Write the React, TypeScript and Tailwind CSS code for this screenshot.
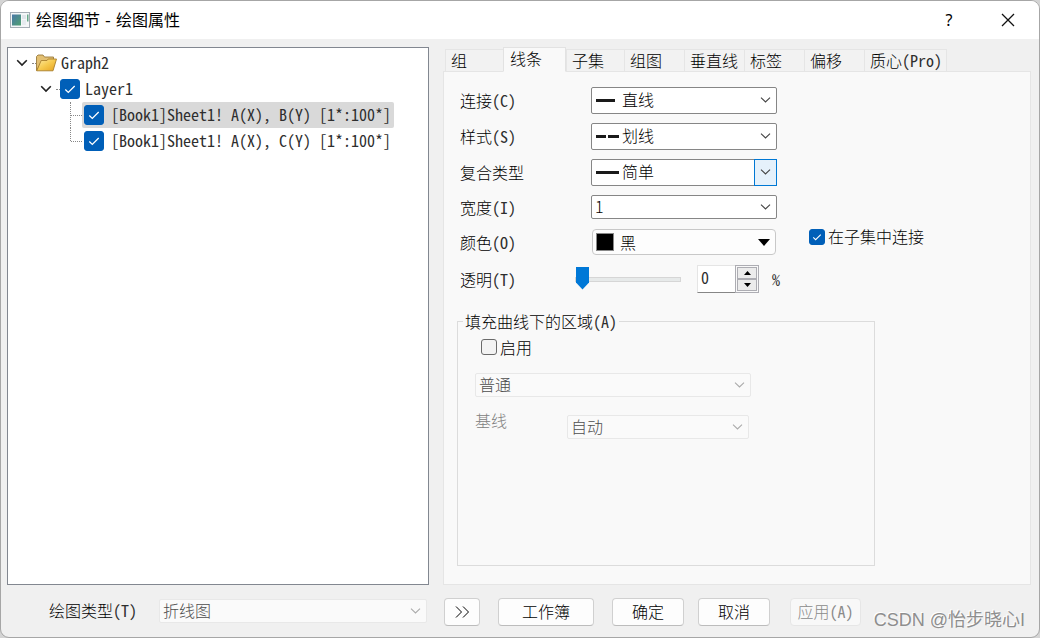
import React from "react";

const BASE_FONT = "font-['Noto_Sans_Mono_CJK_SC','Noto_Sans_CJK_SC',monospace]";
const LIGHT_FONT = "font-['Noto_Sans_CJK_SC',sans-serif] font-light";

function Cjk({ children }: { children: string }) {
  return <span className={LIGHT_FONT}>{children}</span>;
}

function Latin({ children }: { children: string }) {
  return <span className="text-[#2e2e2e]">{children}</span>;
}

function Chevron({ className = "" }: { className?: string }) {
  return (
    <svg
      aria-hidden="true"
      viewBox="0 0 11 6"
      className={`h-[6px] w-[11px] fill-none stroke-current ${className}`}
      strokeWidth="1.1"
    >
      <path d="M1 0.6 5.5 5 10 0.6" />
    </svg>
  );
}

function TickBox({
  id,
  label,
  size = "small",
  checked = false,
}: {
  id?: string;
  label?: string;
  size?: "small" | "large";
  checked?: boolean;
}) {
  const box = size === "large" ? "h-5 w-5" : "h-4 w-4";
  return (
    <span className={`relative block shrink-0 ${box}`}>
      <input
        id={id}
        aria-label={label}
        type="checkbox"
        defaultChecked={checked}
        className={`peer block appearance-none rounded-[3px] border border-[#6a6a6a] bg-[#f3f3f3] checked:border-[#005fb8] checked:bg-[#005fb8] ${box}`}
      />
      <svg
        aria-hidden="true"
        viewBox="0 0 20 20"
        className="pointer-events-none absolute inset-0 hidden h-full w-full fill-none stroke-white peer-checked:block"
        strokeWidth="1.3"
      >
        <path d="M5.300 10.600 8.300 13.400 14.700 7" />
      </svg>
    </span>
  );
}

function Combo({
  id,
  value,
  height = "h-[27px]",
  pad = "pl-[30px]",
  art,
  hot = false,
}: {
  id: string;
  value: string;
  height?: string;
  pad?: string;
  art?: React.ReactNode;
  hot?: boolean;
}) {
  return (
    <div className={`relative w-[186px] ${height}`}>
      <select
        id={id}
        className={`block h-full w-full appearance-none rounded-[2px] border border-[#868686] bg-white pb-[2px] text-base leading-5 ${LIGHT_FONT} ${pad}`}
      >
        <option>{value}</option>
      </select>
      {art}
      <span
        className={`pointer-events-none absolute inset-y-0 right-0 flex w-[23px] items-center justify-center ${
          hot ? "border border-[#0078d4] bg-[#e5f1fb]" : ""
        }`}
      >
        <Chevron className="text-[#444444]" />
      </span>
    </div>
  );
}

function GreyCombo({ id, label, value, box }: { id: string; label?: string; value: string; box: string }) {
  return (
    <div className={`relative h-6 ${box}`}>
      <select
        id={id}
        aria-label={label}
        disabled
        className={`block h-full w-full appearance-none rounded-[2px] border border-[#e8e8e8] bg-[#fafafa] pb-[2px] pl-[3px] text-base leading-5 text-[#4d4d4d] opacity-100 ${LIGHT_FONT}`}
      >
        <option>{value}</option>
      </select>
      <span className="pointer-events-none absolute inset-y-0 right-0 flex w-[23px] items-center justify-center">
        <Chevron className="text-[#ababab]" />
      </span>
    </div>
  );
}

function LineArt({ children }: { children: React.ReactNode }) {
  return (
    <svg
      aria-hidden="true"
      viewBox="0 0 24 4"
      className="pointer-events-none absolute top-[11px] left-[5px] h-1 w-6 fill-[#1a1a1a]"
    >
      {children}
    </svg>
  );
}

function Row({
  id,
  text,
  latin,
  height,
  children,
}: {
  id: string;
  text: string;
  latin?: string;
  height: string;
  children: React.ReactNode;
}) {
  return (
    <div className={`flex items-center ${height}`}>
      <label htmlFor={id} className="w-[131px] shrink-0 pb-px">
        <Cjk>{text}</Cjk>
        {latin && <Latin>{latin}</Latin>}
      </label>
      {children}
    </div>
  );
}

function TreeArrow() {
  return (
    <button type="button" aria-label="折叠" className="flex h-4 w-[15px] shrink-0 items-center justify-center">
      <svg viewBox="0 0 12 8" className="h-2 w-3 fill-none stroke-[#222222]" strokeWidth="1.6">
        <path d="M1.2 1.2 6 6 10.800 1.2" />
      </svg>
    </button>
  );
}

function Folder() {
  return (
    <svg viewBox="0 0 21 18" className="h-[18px] w-[21px] shrink-0">
      <defs>
        <linearGradient id="folderFront" x1="0" y1="0" x2="1" y2="1">
          <stop offset="0" stopColor="#fdeaa6" />
          <stop offset="0.5" stopColor="#f6ca4f" />
          <stop offset="1" stopColor="#e5a11f" />
        </linearGradient>
      </defs>
      <path d="M0.500 16.500V2.500L2 1H7L8.500 3H17.500V7L6 8Z" fill="#e3c073" stroke="#9a7a3c" strokeWidth="0.9" />
      <path d="M0.700 16.800 5.200 6.500H11L12.200 5H20.500L17 16.800Z" fill="url(#folderFront)" stroke="#a87f2c" strokeWidth="0.9" />
    </svg>
  );
}

const tabs: { text: string; latin?: string; width: string; active?: boolean }[] = [
  { text: "组", width: "w-[58px]" },
  { text: "线条", width: "w-[63px]", active: true },
  { text: "子集", width: "w-[58px]" },
  { text: "组图", width: "w-[60px]" },
  { text: "垂直线", width: "w-[60px]" },
  { text: "标签", width: "w-[60px]" },
  { text: "偏移", width: "w-[60px]" },
  { text: "质心", latin: "(Pro)", width: "w-[83px]" },
];

const plots = ["[Book1]Sheet1! A(X), B(Y) [1*:100*]", "[Book1]Sheet1! A(X), C(Y) [1*:100*]"];

const TREE_TEXT = "pb-[3px] whitespace-pre text-[#2e2e2e]";

const BUTTON =
  "h-7 shrink-0 rounded-[4px] border border-[#d0d0d0] border-b-[#bcbcbc] bg-[#fdfdfd] text-base leading-6";

export default function App() {
  return (
    <div className={`flex min-h-screen bg-[#d4d4d4] text-base leading-6 text-black ${BASE_FONT}`}>
      <div className="relative flex flex-1 flex-col overflow-hidden rounded-[9px] border border-[#a6a6a6] bg-[#f0f0f0]">
        <header className="flex h-[38px] items-center bg-white pr-[21px] pl-[9px]">
          <svg viewBox="0 0 20 16" className="h-4 w-5 shrink-0">
            <defs>
              <linearGradient id="appIcon" x1="0" y1="0" x2="1" y2="1">
                <stop offset="0" stopColor="#4a78a8" />
                <stop offset="1" stopColor="#4fa070" />
              </linearGradient>
            </defs>
            <rect x="0.500" y="0.500" width="19" height="15" fill="#f4f6f8" stroke="#a5adb5" />
            <rect x="2" y="2.500" width="9" height="11" fill="url(#appIcon)" />
            <rect x="12" y="3" width="4" height="4" fill="#dfe5ea" />
            <rect x="12" y="8" width="4" height="5" fill="#e6ebef" />
            <rect x="17" y="2.500" width="1.500" height="7" fill="#67a888" />
          </svg>
          <h1 className="ml-[6px] flex-1 pt-[2px] font-['DejaVu_Sans','Noto_Sans_CJK_SC',sans-serif] text-base leading-6 font-normal">
            绘图细节 - 绘图属性
          </h1>
          <button type="button" aria-label="帮助" className="w-6 font-['Noto_Sans',sans-serif] text-base font-normal">
            ?
          </button>
          <button type="button" aria-label="关闭" className="ml-[37px] flex h-6 w-5 items-center justify-center">
            <svg viewBox="0 0 14 14" className="h-[14px] w-[14px] stroke-[#111111]" strokeWidth="1.3">
              <path d="M1 1 13 13M13 1 1 13" />
            </svg>
          </button>
        </header>

        <main className="grid flex-1 grid-cols-[422fr_588fr] gap-[14px] pt-2 pr-2 pl-[6px]">
          <section className="border border-[#828790] bg-white pt-[2px] pl-[6px]">
            <ul>
              <li>
                <div className="flex h-[26px] items-center">
                  <TreeArrow />
                  <span className="ml-[3px] w-1 border-t border-dotted border-[#888888]" />
                  <Folder />
                  <span className={`ml-[4px] ${TREE_TEXT}`}>Graph2</span>
                </div>
                <ul className="pl-6">
                  <li>
                    <div className="flex h-[26px] items-center">
                      <TreeArrow />
                      <span className="ml-[3px] w-1 border-t border-dotted border-[#888888]" />
                      <TickBox size="large" label="Layer1" checked />
                      <span className={`ml-[5px] ${TREE_TEXT}`}>Layer1</span>
                    </div>
                    <ul className="ml-8">
                      {plots.map((plot, i) => (
                        <li key={plot} className="flex h-[26px]">
                          <span
                            className={`w-px border-l border-dotted border-[#888888] ${i === 1 ? "h-[13px]" : "h-full"}`}
                          />
                          <span className="mt-[13px] h-px w-[11px] border-t border-dotted border-[#888888]" />
                          <span
                            className={`flex items-center rounded-[2px] pr-[3px] pl-[2px] ${i === 0 ? "bg-[#d9d9d9]" : ""}`}
                          >
                            <TickBox size="large" label={plot} checked />
                            <span className={`ml-[7px] ${TREE_TEXT}`}>{plot}</span>
                          </span>
                        </li>
                      ))}
                    </ul>
                  </li>
                </ul>
              </li>
            </ul>
          </section>

          <section className="flex flex-col">
            <div role="tablist" className="flex h-6 items-end pl-[2px]">
              {tabs.map((tab) => (
                <button
                  key={tab.text}
                  type="button"
                  role="tab"
                  aria-selected={!!tab.active}
                  className={`shrink-0 border pb-[3px] text-left leading-5 whitespace-nowrap ${tab.width} ${
                    tab.active
                      ? "relative -mb-px h-[25px] border-[#e2e2e2] border-b-[#f9f9f9] bg-[#f9f9f9] pl-[6px]"
                      : "h-[22px] border-r-0 border-b-0 border-[#e5e5e5] bg-[#f2f2f2] pl-[5px] last:border-r"
                  }`}
                >
                  <Cjk>{tab.text}</Cjk>
                  {tab.latin && <Latin>{tab.latin}</Latin>}
                </button>
              ))}
            </div>

            <div role="tabpanel" className="flex flex-1 flex-col border border-[#e5e5e5] bg-[#f9f9f9] pt-[10px] pl-[13px]">
              <div className="flex pl-[3px]">
                <div>
                  <Row id="connect" text="连接" latin="(C)" height="h-9">
                    <Combo
                      id="connect"
                      value="直线"
                      art={
                        <LineArt>
                          <rect y="1" width="19" height="3" />
                        </LineArt>
                      }
                    />
                  </Row>
                  <Row id="style" text="样式" latin="(S)" height="h-9">
                    <Combo
                      id="style"
                      value="划线"
                      art={
                        <LineArt>
                          <rect y="1" width="10" height="3" />
                          <rect x="12" y="1" width="11" height="3" />
                        </LineArt>
                      }
                    />
                  </Row>
                  <Row id="compound" text="复合类型" height="h-9">
                    <Combo
                      id="compound"
                      value="简单"
                      hot
                      art={
                        <LineArt>
                          <rect y="1" width="23" height="3" />
                        </LineArt>
                      }
                    />
                  </Row>
                  <Row id="width" text="宽度" latin="(I)" height="h-[34px]">
                    <Combo id="width" value="1" height="h-6" pad="pl-[3px]" />
                  </Row>
                  <Row id="color" text="颜色" latin="(O)" height="h-9">
                    <div className="relative h-[26px] w-[186px] px-px">
                      <select
                        id="color"
                        className={`block h-full w-full appearance-none rounded-[4px] border border-[#c8c8c8] bg-[#fdfdfd] pb-px pl-[27px] text-base leading-5 ${LIGHT_FONT}`}
                      >
                        <option>黑</option>
                      </select>
                      <span className="pointer-events-none absolute top-1 left-[5px] h-[18px] w-[18px] border border-[#888888] bg-black" />
                      <svg
                        aria-hidden="true"
                        viewBox="0 0 12 7"
                        className="pointer-events-none absolute top-[10px] right-[7px] h-[7px] w-3"
                      >
                        <path d="M0 0H12L6 7Z" />
                      </svg>
                    </div>
                  </Row>
                  <Row id="opacity" text="透明" latin="(T)" height="h-[38px]">
                    <input
                      id="opacity"
                      type="range"
                      defaultValue={0}
                      className="-ml-4 block h-6 w-[106px] shrink-0 appearance-none bg-transparent [&::-webkit-slider-runnable-track]:h-[5px] [&::-webkit-slider-runnable-track]:border [&::-webkit-slider-runnable-track]:border-[#d6d6d6] [&::-webkit-slider-runnable-track]:bg-[#e7eaea] [&::-webkit-slider-thumb]:-mt-[11px] [&::-webkit-slider-thumb]:h-[23px] [&::-webkit-slider-thumb]:w-[13px] [&::-webkit-slider-thumb]:appearance-none [&::-webkit-slider-thumb]:bg-[#0078d7] [&::-webkit-slider-thumb]:[clip-path:polygon(0_0,100%_0,100%_70%,50%_100%,0_70%)]"
                    />
                    <div className="ml-4 flex h-7 w-[62px] shrink-0">
                      <input
                        aria-label="透明度百分比"
                        type="text"
                        inputMode="numeric"
                        defaultValue="0"
                        className="min-w-0 flex-1 rounded-none border border-r-0 border-[#e5e5e5] border-b-[#868686] bg-white pb-[5px] pl-[3px] leading-5 text-[#2e2e2e] outline-none"
                      />
                      <div className="flex w-6 flex-col border border-[#adadb3] p-px">
                        <button
                          type="button"
                          aria-label="增加"
                          className="flex flex-1 items-center justify-center border border-[#adadb3] bg-[#ececec]"
                        >
                          <svg viewBox="0 0 7 4" className="h-1 w-[7px]">
                            <path d="M0 4H7L3.500 0Z" />
                          </svg>
                        </button>
                        <button
                          type="button"
                          aria-label="减少"
                          className="flex flex-1 items-center justify-center border border-[#adadb3] bg-[#ececec]"
                        >
                          <svg viewBox="0 0 7 4" className="h-1 w-[7px]">
                            <path d="M0 0H7L3.500 4Z" />
                          </svg>
                        </button>
                      </div>
                    </div>
                    <span className="ml-[13px] w-2 text-[#2e2e2e]">%</span>
                  </Row>
                </div>
                <div className="flex flex-col justify-end pb-[48px] pl-[29px]">
                  <label htmlFor="subset" className="flex items-center gap-[3px]">
                    <TickBox id="subset" checked />
                    <span className="pb-[2px]">
                      <Cjk>在子集中连接</Cjk>
                    </span>
                  </label>
                </div>
              </div>

              <fieldset className="mt-[11px] mr-[155px] mb-[18px] flex-1 border border-[#dcdcdc] pl-[17px]">
                <legend className="-ml-[12px] px-[2px]">
                  <Cjk>填充曲线下的区域</Cjk>
                  <Latin>(A)</Latin>
                </legend>
                <label htmlFor="enable" className="mt-[2px] ml-[6px] flex items-center gap-[3px]">
                  <TickBox id="enable" />
                  <Cjk>启用</Cjk>
                </label>
                <div className="mt-[14px]">
                  <GreyCombo id="fill" label="填充方式" value="普通" box="w-[276px]" />
                </div>
                <div className="mt-[18px] flex">
                  <label htmlFor="baseline" className="-mt-[7px] w-[92px] text-[#808080]">
                    <Cjk>基线</Cjk>
                  </label>
                  <GreyCombo id="baseline" value="自动" box="w-[182px]" />
                </div>
              </fieldset>
            </div>
          </section>
        </main>

        <footer className="grid h-[52px] grid-cols-[422fr_588fr] gap-[14px] pt-[13px] pr-2 pl-[6px]">
          <div className="flex pl-[42px]">
            <label htmlFor="plotType" className="w-[110px] shrink-0">
              <Cjk>绘图类型</Cjk>
              <Latin>(T)</Latin>
            </label>
            <div className="flex-1 pt-px pr-[2px]">
              <GreyCombo id="plotType" value="折线图" box="w-full" />
            </div>
          </div>
          <div className="flex pl-px">
            <button type="button" aria-label="展开" className={`flex w-9 items-center justify-center ${BUTTON}`}>
              <svg viewBox="0 0 14 12" className="h-3 w-[14px] fill-none stroke-black" strokeWidth="1">
                <path d="M1 0.500 6.500 6 1 11.500M8 0.500 13.500 6 8 11.500" />
              </svg>
            </button>
            <button type="button" className={`ml-[18px] w-24 pb-[2px] ${BUTTON}`}>
              <Cjk>工作簿</Cjk>
            </button>
            <button type="button" className={`ml-[18px] w-[72px] pb-[2px] ${BUTTON}`}>
              <Cjk>确定</Cjk>
            </button>
            <button type="button" className={`ml-[14px] w-[72px] pb-[2px] ${BUTTON}`}>
              <Cjk>取消</Cjk>
            </button>
            <button
              type="button"
              disabled
              className="ml-5 h-7 w-[71px] shrink-0 rounded-[4px] border border-[#e6e6e6] bg-[#f8f8f8] pb-[2px] text-base leading-6 text-[#8a8a8a]"
            >
              <Cjk>应用</Cjk>(A)
            </button>
          </div>
        </footer>

        <p className="pointer-events-none absolute right-[14px] bottom-[5px] font-['Liberation_Sans','Noto_Sans_CJK_SC',sans-serif] text-[18px] font-normal text-[#8e8e8e] [text-shadow:-1px_-1px_0_#ffffff]">
          CSDN @怡步晓心I
        </p>
      </div>
    </div>
  );
}
